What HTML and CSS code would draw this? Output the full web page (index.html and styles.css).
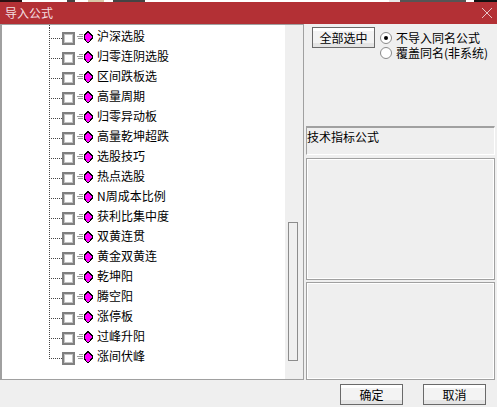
FILE: index.html
```html
<!DOCTYPE html>
<html lang="zh">
<head>
<meta charset="utf-8">
<title>导入公式</title>
<link rel="stylesheet" href="styles.css">
</head>
<body>
<div class="strip"></div>
<header class="titlebar">
  <span class="title">导入公式</span>
  <svg class="close" width="10" height="10" viewBox="0 0 10 10"><path d="M0 0L10 10M10 0L0 10" stroke="#e8c4c6" stroke-width="1" fill="none"/></svg>
</header>
<main class="body">
  <section class="tree-panel">
    <div class="tree">
      <div class="stub"></div>
      <div class="row"><i class="branch"></i><i class="check"></i><svg class="icon" width="16" height="13" viewBox="0 0 16 13"><path class="lines" d="M2 3.5h4M0 5.5h6M1 7.5h5"/><path class="gem" d="M11 0.5L15 4.5V7.5L11 12L7 7.5V4.5Z"/></svg><span class="label">沪深选股</span></div>
      <div class="row"><i class="branch"></i><i class="check"></i><svg class="icon" width="16" height="13" viewBox="0 0 16 13"><path class="lines" d="M2 3.5h4M0 5.5h6M1 7.5h5"/><path class="gem" d="M11 0.5L15 4.5V7.5L11 12L7 7.5V4.5Z"/></svg><span class="label">归零连阴选股</span></div>
      <div class="row"><i class="branch"></i><i class="check"></i><svg class="icon" width="16" height="13" viewBox="0 0 16 13"><path class="lines" d="M2 3.5h4M0 5.5h6M1 7.5h5"/><path class="gem" d="M11 0.5L15 4.5V7.5L11 12L7 7.5V4.5Z"/></svg><span class="label">区间跌板选</span></div>
      <div class="row"><i class="branch"></i><i class="check"></i><svg class="icon" width="16" height="13" viewBox="0 0 16 13"><path class="lines" d="M2 3.5h4M0 5.5h6M1 7.5h5"/><path class="gem" d="M11 0.5L15 4.5V7.5L11 12L7 7.5V4.5Z"/></svg><span class="label">高量周期</span></div>
      <div class="row"><i class="branch"></i><i class="check"></i><svg class="icon" width="16" height="13" viewBox="0 0 16 13"><path class="lines" d="M2 3.5h4M0 5.5h6M1 7.5h5"/><path class="gem" d="M11 0.5L15 4.5V7.5L11 12L7 7.5V4.5Z"/></svg><span class="label">归零异动板</span></div>
      <div class="row"><i class="branch"></i><i class="check"></i><svg class="icon" width="16" height="13" viewBox="0 0 16 13"><path class="lines" d="M2 3.5h4M0 5.5h6M1 7.5h5"/><path class="gem" d="M11 0.5L15 4.5V7.5L11 12L7 7.5V4.5Z"/></svg><span class="label">高量乾坤超跌</span></div>
      <div class="row"><i class="branch"></i><i class="check"></i><svg class="icon" width="16" height="13" viewBox="0 0 16 13"><path class="lines" d="M2 3.5h4M0 5.5h6M1 7.5h5"/><path class="gem" d="M11 0.5L15 4.5V7.5L11 12L7 7.5V4.5Z"/></svg><span class="label">选股技巧</span></div>
      <div class="row"><i class="branch"></i><i class="check"></i><svg class="icon" width="16" height="13" viewBox="0 0 16 13"><path class="lines" d="M2 3.5h4M0 5.5h6M1 7.5h5"/><path class="gem" d="M11 0.5L15 4.5V7.5L11 12L7 7.5V4.5Z"/></svg><span class="label">热点选股</span></div>
      <div class="row"><i class="branch"></i><i class="check"></i><svg class="icon" width="16" height="13" viewBox="0 0 16 13"><path class="lines" d="M2 3.5h4M0 5.5h6M1 7.5h5"/><path class="gem" d="M11 0.5L15 4.5V7.5L11 12L7 7.5V4.5Z"/></svg><span class="label">N周成本比例</span></div>
      <div class="row"><i class="branch"></i><i class="check"></i><svg class="icon" width="16" height="13" viewBox="0 0 16 13"><path class="lines" d="M2 3.5h4M0 5.5h6M1 7.5h5"/><path class="gem" d="M11 0.5L15 4.5V7.5L11 12L7 7.5V4.5Z"/></svg><span class="label">获利比集中度</span></div>
      <div class="row"><i class="branch"></i><i class="check"></i><svg class="icon" width="16" height="13" viewBox="0 0 16 13"><path class="lines" d="M2 3.5h4M0 5.5h6M1 7.5h5"/><path class="gem" d="M11 0.5L15 4.5V7.5L11 12L7 7.5V4.5Z"/></svg><span class="label">双黄连贯</span></div>
      <div class="row"><i class="branch"></i><i class="check"></i><svg class="icon" width="16" height="13" viewBox="0 0 16 13"><path class="lines" d="M2 3.5h4M0 5.5h6M1 7.5h5"/><path class="gem" d="M11 0.5L15 4.5V7.5L11 12L7 7.5V4.5Z"/></svg><span class="label">黄金双黄连</span></div>
      <div class="row"><i class="branch"></i><i class="check"></i><svg class="icon" width="16" height="13" viewBox="0 0 16 13"><path class="lines" d="M2 3.5h4M0 5.5h6M1 7.5h5"/><path class="gem" d="M11 0.5L15 4.5V7.5L11 12L7 7.5V4.5Z"/></svg><span class="label">乾坤阳</span></div>
      <div class="row"><i class="branch"></i><i class="check"></i><svg class="icon" width="16" height="13" viewBox="0 0 16 13"><path class="lines" d="M2 3.5h4M0 5.5h6M1 7.5h5"/><path class="gem" d="M11 0.5L15 4.5V7.5L11 12L7 7.5V4.5Z"/></svg><span class="label">腾空阳</span></div>
      <div class="row"><i class="branch"></i><i class="check"></i><svg class="icon" width="16" height="13" viewBox="0 0 16 13"><path class="lines" d="M2 3.5h4M0 5.5h6M1 7.5h5"/><path class="gem" d="M11 0.5L15 4.5V7.5L11 12L7 7.5V4.5Z"/></svg><span class="label">涨停板</span></div>
      <div class="row"><i class="branch"></i><i class="check"></i><svg class="icon" width="16" height="13" viewBox="0 0 16 13"><path class="lines" d="M2 3.5h4M0 5.5h6M1 7.5h5"/><path class="gem" d="M11 0.5L15 4.5V7.5L11 12L7 7.5V4.5Z"/></svg><span class="label">过峰升阳</span></div>
      <div class="row"><i class="branch last"></i><i class="check"></i><svg class="icon" width="16" height="13" viewBox="0 0 16 13"><path class="lines" d="M2 3.5h4M0 5.5h6M1 7.5h5"/><path class="gem" d="M11 0.5L15 4.5V7.5L11 12L7 7.5V4.5Z"/></svg><span class="label">涨间伏峰</span></div>
    </div>
    <div class="scrollbar"><div class="thumb"></div></div>
  </section>
  <aside class="side">
    <div class="options">
      <button class="btn select-all" type="button">全部选中</button>
      <div class="radios">
        <label class="radio"><i class="dot on"></i>不导入同名公式</label>
        <label class="radio"><i class="dot"></i>覆盖同名(非系统)</label>
      </div>
    </div>
    <div class="caption">技术指标公式</div>
    <div class="box box-a"></div>
    <div class="box box-b"></div>
  </aside>
</main>
<footer class="footer">
  <button class="btn action" type="button">确定</button>
  <button class="btn action" type="button">取消</button>
</footer>
</body>
</html>
```
FILE: styles.css
```css
* { box-sizing: border-box; }
html, body { margin: 0; padding: 0; }
body {
  width: 497px;
  height: 407px;
  overflow: hidden;
  background: #efefef;
  font-family: "Noto Sans CJK SC", "Liberation Sans", sans-serif;
  font-size: 12px;
  color: #000;
  display: flex;
  flex-direction: column;
}
.strip {
  height: 2px;
  flex: none;
  background: linear-gradient(to right,
    #2a1012 0 22px, #fff 22px 67px, #444 67px 75px, #fff 75px 88px,
    #d8c8a8 88px 104px, #fff 104px 113px, #444 113px 145px,
    #fff 145px 389px, #e8e8e8 389px 400px, #555 400px 466px,
    #fff 466px 474px, #111 474px);
}
.titlebar {
  height: 22px;
  flex: none;
  background: #b33035;
  display: flex;
  align-items: center;
  justify-content: space-between;
  padding: 0 5px 0 5px;
}
.title { color: #f3dfe0; font-size: 12px; line-height: 22px; letter-spacing: 0; }
.close { display: block; margin-top: -1px; }
.body { height: 356px; flex: none; display: flex; }
.tree-panel {
  width: 304px;
  flex: none;
  display: flex;
  border-top: 1px solid #a0a0a0;
  border-left: 2px solid #a0a0a0;
  border-right: 1px solid #a0a0a0;
  border-bottom: 1px solid #a0a0a0;
  box-shadow: inset -1px 0 0 #fff;
}
.tree { width: 283px; flex: none; background: #fff; overflow: hidden; }
.stub {
  height: 3px;
  margin-left: 47px;
  width: 1px;
  background: repeating-linear-gradient(to bottom, #444 0 1px, transparent 1px 2px);
}
.row { height: 20px; display: flex; align-items: center; }
.branch {
  width: 13px;
  height: 20px;
  margin-left: 47px;
  flex: none;
  background:
    repeating-linear-gradient(to bottom, #444 0 1px, transparent 1px 2px) left top / 1px 100% no-repeat,
    repeating-linear-gradient(to right, #444 0 1px, transparent 1px 2px) left 10px / 100% 1px no-repeat;
}
.branch.last {
  background:
    repeating-linear-gradient(to bottom, #444 0 1px, transparent 1px 2px) left top / 1px 50% no-repeat,
    repeating-linear-gradient(to right, #444 0 1px, transparent 1px 2px) left 10px / 100% 1px no-repeat;
}
.check {
  width: 13px;
  height: 13px;
  flex: none;
  border: 2px solid #808080;
  background: #fff;
  box-shadow: inset 0 0 0 1px #c4c4c4;
}
.icon { display: block; flex: none; margin: -1px 0 0 2px; }
.lines { stroke: #999; fill: none; shape-rendering: crispEdges; }
.gem { fill: #f0f; stroke: #000; stroke-width: 1; shape-rendering: crispEdges; }
.label { margin-left: 4px; line-height: 16px; padding-bottom: 4px; white-space: nowrap; }
.scrollbar {
  flex: 1;
  background: #efefef;
  padding: 197px 5px 18px 3px;
}
.thumb { height: 100%; width: 10px; border: 1px solid #8c8c8c; background: #efefef; }
.side {
  flex: 1;
  min-width: 0;
  padding-left: 2px;
  padding-right: 2px;
  display: flex;
  flex-direction: column;
}
.options { height: 102px; flex: none; display: flex; align-items: flex-start; padding: 3px 0 0 6px; }
.btn {
  font: inherit;
  color: #000;
  padding: 0;
  height: 21px;
  border: 1px solid #6a6a6a;
  background: linear-gradient(to bottom, #fff 0 3px, #f3f3f3 3px 15px, #e4e4e4 15px);
  line-height: 17px;
}
.select-all { width: 63px; flex: none; }
.radios { margin-left: 5px; display: flex; flex-direction: column; padding-top: 3px; }
.radio { display: flex; align-items: center; height: 15px; line-height: 15px; white-space: nowrap; }
.dot {
  width: 12px;
  height: 12px;
  margin-right: 4px;
  border-radius: 50%;
  border: 1px solid #8a8a8a;
  background: #fff;
  flex: none;
  display: flex;
  align-items: center;
  justify-content: center;
}
.dot.on::after { content: ""; width: 4px; height: 4px; border-radius: 50%; background: #000; }
.caption {
  height: 29px;
  flex: none;
  border-top: 2px solid #a0a0a0;
  border-left: 1px solid #a0a0a0;
  border-right: 1px solid #fff;
  border-bottom: 1px solid #fff;
  line-height: 18px;
}
.box { border: 1px solid #a0a0a0; box-shadow: inset 0 0 0 1px #fff; flex: none; }
.box-a { height: 122px; margin-top: 3px; }
.box-b { height: 98px; margin-top: 2px; }
.footer { flex: 1; display: flex; justify-content: flex-end; gap: 20px; padding: 4px 11px 0 0; }
.action { width: 63px; }
```
